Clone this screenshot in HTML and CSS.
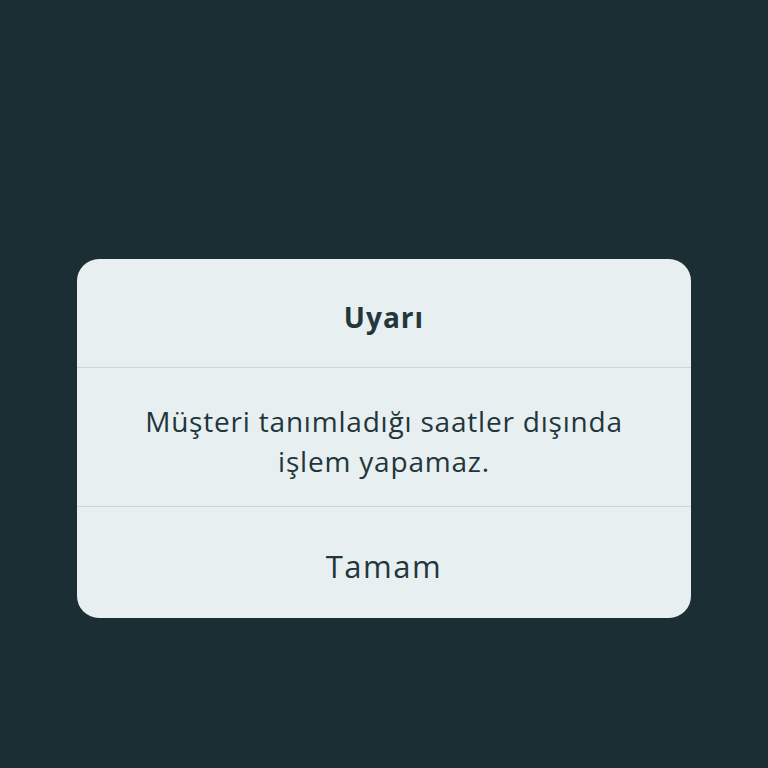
FILE: index.html
```html
<!DOCTYPE html>
<html lang="tr">
<head>
    <meta charset="UTF-8">
    <meta name="viewport" content="width=device-width, initial-scale=1.0">
    <title>Uyarı</title>
    <link rel="stylesheet" href="styles.css">
</head>
<body>
<div class="alert">
    <div class="alert-title">Uyarı</div>
    <div class="alert-message">Müşteri tanımladığı saatler dışında<br>işlem yapamaz.</div>
    <button class="alert-button">Tamam</button>
</div>
</body>
</html>
```

FILE: styles.css
```css
body {
    font-family: "Open Sans", sans-serif;
    background: #1b2e34;
    margin: 0;
    padding: 259px 0 0;
    height: 768px;
    box-sizing: border-box;
    color: #22363b;
}
.alert {
    width: 614px;
    margin: 0 auto;
    background: #e8eff0;
    border-radius: 22px;
    overflow: hidden;
}
.alert-title {
    height: 109px;
    padding-top: 8px;
    display: flex;
    align-items: center;
    justify-content: center;
    font-size: 28px;
    font-weight: 700;
    letter-spacing: 1px;
    border-bottom: 1px solid #cdd5d7;
    box-sizing: border-box;
}
.alert-message {
    height: 139px;
    padding-top: 8px;
    display: flex;
    align-items: center;
    justify-content: center;
    text-align: center;
    font-size: 28px;
    line-height: 40px;
    letter-spacing: 0.8px;
    border-bottom: 1px solid #cdd5d7;
    box-sizing: border-box;
}
.alert-button {
    display: block;
    width: 100%;
    height: 111px;
    padding: 6px 0 0;
    border: none;
    background: none;
    font-family: inherit;
    font-size: 31px;
    letter-spacing: 1.5px;
    color: inherit;
    cursor: pointer;
}
```
